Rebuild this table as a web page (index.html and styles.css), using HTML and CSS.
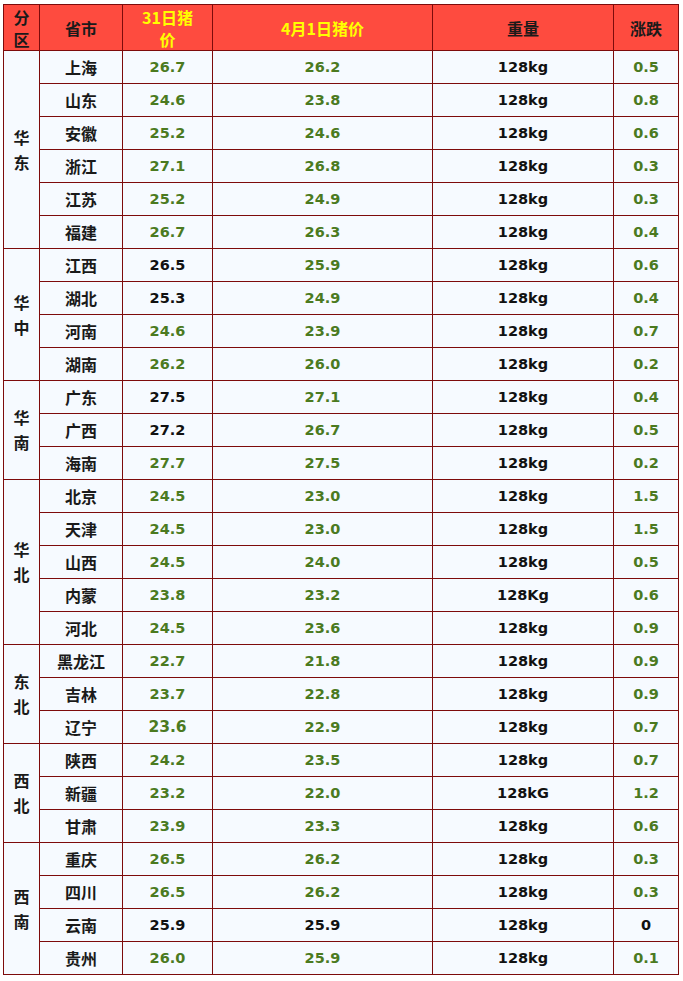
FILE: index.html
```html
<!DOCTYPE html>
<html lang="zh">
<head>
<meta charset="utf-8">
<link rel="stylesheet" href="styles.css">
</head>
<body>
<div class="wrap">
<table class="price">
<colgroup>
<col class="c-zone"><col class="c-prov"><col class="c-p1"><col class="c-p2"><col class="c-w"><col class="c-d">
</colgroup>
<thead>
<tr>
<th class="zh">分<br>区</th>
<th class="zh">省市</th>
<th class="zh yellow">31日猪<br>价</th>
<th class="zh yellow">4月1日猪价</th>
<th class="zh">重量</th>
<th class="zh">涨跌</th>
</tr>
</thead>
<tbody>
<tr><td class="zone" rowspan="6">华<br>东</td><td class="prov">上海</td><td class="num g">26.7</td><td class="num g">26.2</td><td class="num">128kg</td><td class="num g">0.5</td></tr>
<tr><td class="prov">山东</td><td class="num g">24.6</td><td class="num g">23.8</td><td class="num">128kg</td><td class="num g">0.8</td></tr>
<tr><td class="prov">安徽</td><td class="num g">25.2</td><td class="num g">24.6</td><td class="num">128kg</td><td class="num g">0.6</td></tr>
<tr><td class="prov">浙江</td><td class="num g">27.1</td><td class="num g">26.8</td><td class="num">128kg</td><td class="num g">0.3</td></tr>
<tr><td class="prov">江苏</td><td class="num g">25.2</td><td class="num g">24.9</td><td class="num">128kg</td><td class="num g">0.3</td></tr>
<tr><td class="prov">福建</td><td class="num g">26.7</td><td class="num g">26.3</td><td class="num">128kg</td><td class="num g">0.4</td></tr>
<tr><td class="zone" rowspan="4">华<br>中</td><td class="prov">江西</td><td class="num">26.5</td><td class="num g">25.9</td><td class="num">128kg</td><td class="num g">0.6</td></tr>
<tr><td class="prov">湖北</td><td class="num">25.3</td><td class="num g">24.9</td><td class="num">128kg</td><td class="num g">0.4</td></tr>
<tr><td class="prov">河南</td><td class="num g">24.6</td><td class="num g">23.9</td><td class="num">128kg</td><td class="num g">0.7</td></tr>
<tr><td class="prov">湖南</td><td class="num g">26.2</td><td class="num g">26.0</td><td class="num">128kg</td><td class="num g">0.2</td></tr>
<tr><td class="zone" rowspan="3">华<br>南</td><td class="prov">广东</td><td class="num">27.5</td><td class="num g">27.1</td><td class="num">128kg</td><td class="num g">0.4</td></tr>
<tr><td class="prov">广西</td><td class="num">27.2</td><td class="num g">26.7</td><td class="num">128kg</td><td class="num g">0.5</td></tr>
<tr><td class="prov">海南</td><td class="num g">27.7</td><td class="num g">27.5</td><td class="num">128kg</td><td class="num g">0.2</td></tr>
<tr><td class="zone" rowspan="5">华<br>北</td><td class="prov">北京</td><td class="num g">24.5</td><td class="num g">23.0</td><td class="num">128kg</td><td class="num g">1.5</td></tr>
<tr><td class="prov">天津</td><td class="num g">24.5</td><td class="num g">23.0</td><td class="num">128kg</td><td class="num g">1.5</td></tr>
<tr><td class="prov">山西</td><td class="num g">24.5</td><td class="num g">24.0</td><td class="num">128kg</td><td class="num g">0.5</td></tr>
<tr><td class="prov">内蒙</td><td class="num g">23.8</td><td class="num g">23.2</td><td class="num">128Kg</td><td class="num g">0.6</td></tr>
<tr><td class="prov">河北</td><td class="num g">24.5</td><td class="num g">23.6</td><td class="num">128kg</td><td class="num g">0.9</td></tr>
<tr><td class="zone" rowspan="3">东<br>北</td><td class="prov">黑龙江</td><td class="num g">22.7</td><td class="num g">21.8</td><td class="num">128kg</td><td class="num g">0.9</td></tr>
<tr><td class="prov">吉林</td><td class="num g">23.7</td><td class="num g">22.8</td><td class="num">128kg</td><td class="num g">0.9</td></tr>
<tr><td class="prov">辽宁</td><td class="num g big">23.6</td><td class="num g">22.9</td><td class="num">128kg</td><td class="num g">0.7</td></tr>
<tr><td class="zone" rowspan="3">西<br>北</td><td class="prov">陕西</td><td class="num g">24.2</td><td class="num g">23.5</td><td class="num">128kg</td><td class="num g">0.7</td></tr>
<tr><td class="prov">新疆</td><td class="num g">23.2</td><td class="num g">22.0</td><td class="num">128kG</td><td class="num g">1.2</td></tr>
<tr><td class="prov">甘肃</td><td class="num g">23.9</td><td class="num g">23.3</td><td class="num">128kg</td><td class="num g">0.6</td></tr>
<tr><td class="zone" rowspan="4">西<br>南</td><td class="prov">重庆</td><td class="num g">26.5</td><td class="num g">26.2</td><td class="num">128kg</td><td class="num g">0.3</td></tr>
<tr><td class="prov">四川</td><td class="num g">26.5</td><td class="num g">26.2</td><td class="num">128kg</td><td class="num g">0.3</td></tr>
<tr><td class="prov">云南</td><td class="num">25.9</td><td class="num">25.9</td><td class="num">128kg</td><td class="num">0</td></tr>
<tr><td class="prov">贵州</td><td class="num g">26.0</td><td class="num g">25.9</td><td class="num">128kg</td><td class="num g">0.1</td></tr>
</tbody>
</table>
</div>
</body>
</html>
```
FILE: styles.css
```css
html, body {
  margin: 0;
  padding: 0;
  background: #ffffff;
}
.wrap {
  padding: 4px 0 0 3px;
}
.price {
  border-collapse: collapse;
  table-layout: fixed;
  width: 675px;
  background: #f6faff;
}
.c-zone { width: 36px; }
.c-prov { width: 83px; }
.c-p1 { width: 90px; }
.c-p2 { width: 220px; }
.c-w { width: 181px; }
.c-d { width: 65px; }
.price th, .price td {
  border: 1px solid #7d0b0b;
  padding: 0;
  text-align: center;
  vertical-align: middle;
}
.price thead th {
  background: #fe4b3f;
  height: 45px;
  font-family: "Noto Sans CJK SC", "Microsoft YaHei", sans-serif;
  font-size: 16px;
  font-weight: 700;
  line-height: 22px;
  color: #1a1a1a;
}
.price thead th.yellow {
  color: #ffff00;
  font-weight: 700;
}
.price tbody td {
  height: 32px;
}
.zone, .prov {
  font-family: "Noto Sans CJK SC", "Microsoft YaHei", sans-serif;
  font-size: 16px;
  font-weight: 700;
  color: #1a1a1a;
}
.zone {
  line-height: 25px;
}
.num {
  font-family: "DejaVu Sans", Verdana, sans-serif;
  font-size: 14.5px;
  font-weight: 700;
  color: #111111;
}
.num.g {
  color: #4b7a1f;
}
.num.big {
  font-size: 15.5px;
}
```
